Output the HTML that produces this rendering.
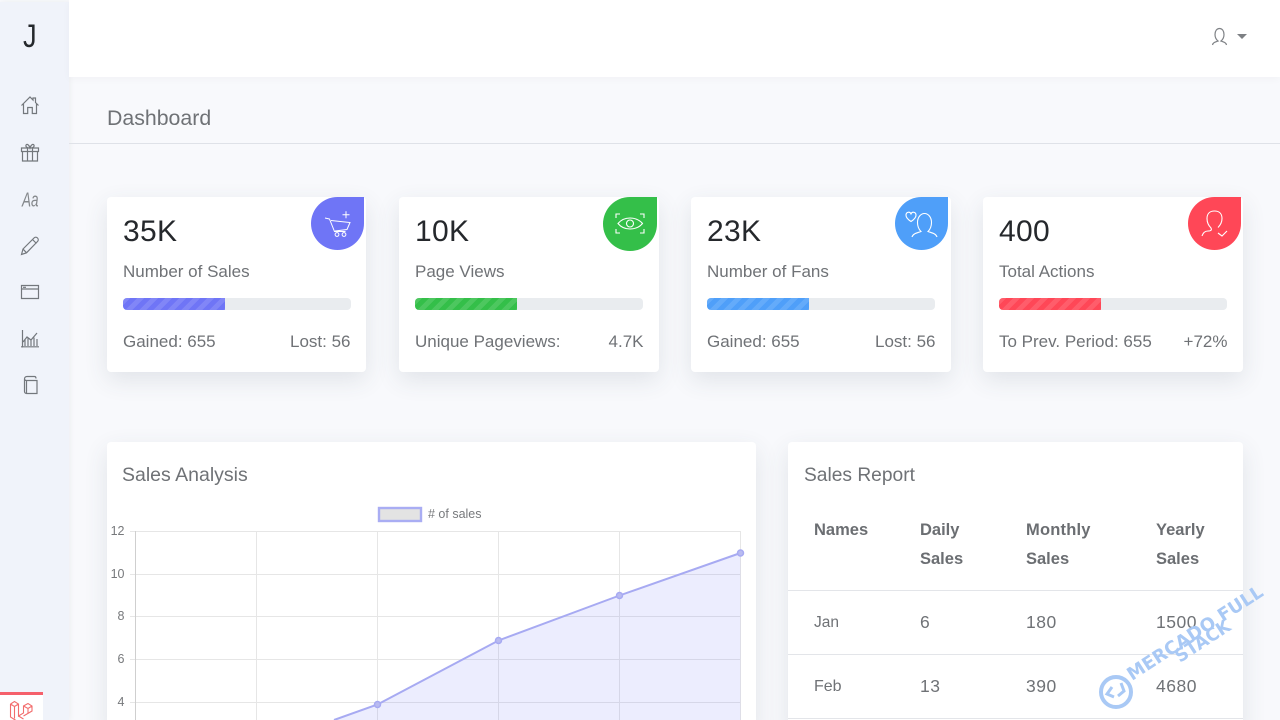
<!DOCTYPE html>
<html lang="en"><head><meta charset="utf-8"><title>Dashboard</title>
<style>
*{box-sizing:border-box}
html,body{margin:0;padding:0;width:1280px;height:720px;overflow:hidden;background:#f8f9fc;font-family:"Liberation Sans",sans-serif;color:#6f7276}
#wrap{position:relative;width:1280px;height:720px;overflow:hidden;background:#f8f9fc}
.a{position:absolute;white-space:nowrap}
#side{left:0;top:2px;width:69px;height:718px;background:#f0f3fa;box-shadow:1px 0 6px rgba(0,0,0,.05)}
#top{left:69px;top:0;width:1211px;height:77px;background:#fff;box-shadow:0 2px 8px rgba(0,0,0,.03)}
#band{left:69px;top:77px;width:1211px;height:67px;border-bottom:1px solid #dfe2e8}
.card{position:absolute;background:#fff;border-radius:4px;box-shadow:0 8px 24px rgba(60,70,90,.12)}
.num{position:absolute;left:16px;top:17px;font-size:30px;line-height:36px;color:#25282c;letter-spacing:.3px}
.lbl{position:absolute;left:16px;top:65px;font-size:17px;line-height:20px}
.bar{position:absolute;left:16px;top:101px;width:228px;height:12px;background:#e9ecef;border-radius:4px;overflow:hidden}
.bar i{display:block;width:102px;height:12px;background-size:14px 14px;background-image:linear-gradient(135deg,rgba(255,255,255,.12) 25%,transparent 25%,transparent 50%,rgba(255,255,255,.12) 50%,rgba(255,255,255,.12) 75%,transparent 75%,transparent)}
.l,.r{position:absolute;top:135px;font-size:17px;line-height:20px}
.l{left:16px}.r{right:15.500px}
.bub{position:absolute;top:0;width:53px;height:53px;border-radius:50% 0 50% 50%}
.bub svg{position:absolute;left:0;top:0}
.t{position:absolute;font-size:16.5px;line-height:20px}
.n{font-size:17.500px;letter-spacing:.5px}
.th{font-weight:700;color:#6b6e72}
.ln{position:absolute;left:788px;width:455px;height:1px;background:#e3e5e9}
svg.ic{position:absolute;left:20px;fill:none;stroke:#73777c;stroke-width:1.2}
</style></head><body><div id="wrap">
<div class="a" id="side"></div>
<div class="a" id="top"></div>
<div class="a" id="band"></div>

<div class="a" style="left:23px;top:18px;font-size:32px;line-height:36px;color:#25282c;transform:scaleX(.85);transform-origin:left">J</div>
<svg class="ic" style="top:95px" width="20" height="20" viewBox="0 0 20 20"><path d="M1.500 10.500 10 2l3 3V3h2.500v4.500l3 3M3.500 9v9.500h4.200v-6h4.600v6h4.200V9"/></svg>
<svg class="ic" style="top:142px" width="20" height="20" viewBox="0 0 20 20"><path d="M1.500 6h17v3.500h-17zM2.500 9.500v9.500h15V9.500M7.500 6v13M12.500 6v13M10 6C7 6 5.500 4.800 6 3.200 6.600 1.500 9 2.500 10 6c1-3.500 3.400-4.500 4-2.800C14.500 4.800 13 6 10 6z"/></svg>
<div class="a" style="left:22px;top:188px;font-size:18px;line-height:20px;font-style:italic;color:#85888c;transform:scale(.75,1.150);transform-origin:left top">Aa</div>
<svg class="ic" style="top:236px" width="20" height="20" viewBox="0 0 20 20"><path d="M1.500 18.500l1.500-5.500L14 2c1-1 2.500-1 3.500 0s1 2.500 0 3.500L6.500 16.800zM3 13l3.500 3.800M12.500 3.500l4 4"/></svg>
<svg class="ic" style="top:282px" width="20" height="20" viewBox="0 0 20 20"><path d="M1.500 3.500h17v13h-17zM1.500 7h17M3 5.300h3"/></svg>
<svg class="ic" style="top:329px" width="20" height="20" viewBox="0 0 20 20"><path d="M2.500 1v17.500M1 17.800h18M5 17V11M8 17V9M11 17v-6M14 17V8.500M17 17v-7M3 13l4-5 4 3 6-7"/></svg>
<svg class="ic" style="top:375px" width="20" height="20" viewBox="0 0 20 20" stroke-width="1.500"><path d="M6.500 5.500h10.500v13H6.500c-1 0-2-.8-2-2V4c0-1.500 1-2.500 2.500-2.500h7.500c1 0 1.500 1 1.500 2M4.500 4.500c.5.700 1 1 2 1M6.500 5.500v13"/></svg>

<svg class="a" style="left:1210px;top:27px" width="20" height="19" viewBox="0 0 20 19" fill="none" stroke="#7f8286" stroke-width="1.200"><path d="M2.500 18c.4-2.400 2.800-3 5.500-4-1.800-1.500-3-3.500-3-6.500C5 4 6.700 1.500 9.500 1.500S14 4 14 7.500c0 3-1.200 5-3 6.500 2.700 1 5.100 1.600 5.500 4"/></svg>
<div class="a" style="left:1237px;top:34px;width:0;height:0;border-left:5px solid transparent;border-right:5px solid transparent;border-top:5px solid #7d8084"></div>

<div class="a" style="left:107px;top:105px;font-size:21.300px;line-height:27px;color:#6f7276">Dashboard</div>

<div class="card" style="left:107px;top:197px;width:259px;height:175px">
<div class="num">35K</div><div class="lbl">Number of Sales</div>
<div class="bar"><i style="background-color:#6f75f6"></i></div>
<div class="l">Gained: 655</div><div class="r">Lost: 56</div>
<div class="bub" style="left:204px;background:#6f75f6"><svg width="53" height="53" viewBox="0 0 53 53" fill="none" stroke="#fff" stroke-width="1"><path d="M14 21l4.500 1 5 12.500h11M20 23.500l19 2-3 7-12 1.500M31.500 17.700h7M35 14.200v7"/><circle cx="26" cy="37.500" r="1.900"/><circle cx="33" cy="37.500" r="1.900"/></svg></div>
</div>

<div class="card" style="left:399px;top:197px;width:260px;height:175px">
<div class="num">10K</div><div class="lbl">Page Views</div>
<div class="bar"><i style="background-color:#34bf49"></i></div>
<div class="l">Unique Pageviews:</div><div class="r">4.7K</div>
<div class="bub" style="left:204px;width:54px;height:54px;background:#34bf49"><svg width="53" height="53" viewBox="0 0 53 53" fill="none" stroke="#fff" stroke-width="1.100"><path d="M13 21v-4h4M37 17h4v4M13 32v4h4M37 36h4v-4M15 26.500c3-3.700 7.500-5.500 12-5.500s9.500 1.800 12.500 5.500c-3 3.700-8 5.500-12.500 5.500s-9-1.800-12-5.500z"/><circle cx="27" cy="26.500" r="3.500"/></svg></div>
</div>

<div class="card" style="left:691px;top:197px;width:260px;height:175px">
<div class="num">23K</div><div class="lbl">Number of Fans</div>
<div class="bar"><i style="background-color:#4f9ff9"></i></div>
<div class="l">Gained: 655</div><div class="r">Lost: 56</div>
<div class="bub" style="left:204px;background:#4f9ff9"><svg width="53" height="53" viewBox="0 0 53 53" fill="none" stroke="#fff" stroke-width="1.100"><path d="M16 24.500c-3-2-5-4-5-6.300 0-3.500 4-3.800 5-1.300 1-2.500 5-2.200 5 1.300 0 2.300-2 4.300-5 6.300zM17 40c1-3.500 5-4 9-5.500-2-2-3.500-5-3.500-9 0-5 3-9 7-9s7 4 7 9c0 4-1.500 7-3.500 9 4 1.500 8 2 9 5.500"/></svg></div>
</div>

<div class="card" style="left:983px;top:197px;width:260px;height:175px">
<div class="num">400</div><div class="lbl">Total Actions</div>
<div class="bar"><i style="background-color:#ff4757"></i></div>
<div class="l">To Prev. Period: 655</div><div class="r">+72%</div>
<div class="bub" style="left:205px;background:#ff4757"><svg width="53" height="53" viewBox="0 0 53 53" fill="none" stroke="#fff" stroke-width="1.100"><path d="M14 39c1-3 3-5 6-5 3 0 4-1 3-3-2.500-2.500-4-5.500-4-9.500 0-5 3-7.500 7.500-7.500s7.500 2.500 7.500 7.500c0 4-1.500 6.500-4 9M30 36l4 3 5-5"/></svg></div>
</div>

<div class="card" style="left:107px;top:442px;width:649px;height:290px"></div>
<div class="card" style="left:788px;top:442px;width:455px;height:290px"></div>

<div class="t" style="left:122px;top:464px;font-size:19.500px;line-height:23px">Sales Analysis</div>
<div class="t" style="left:804px;top:464px;font-size:19.200px;line-height:23px">Sales Report</div>

<svg class="a" style="left:100px;top:500px" width="660" height="220" viewBox="100 500 660 220">
<rect x="379" y="508" width="42" height="13" fill="#e3e3e3" stroke="#a9adf3" stroke-width="2.400"/>
<g stroke="#e6e6e6" stroke-width="1">
<path d="M130 531.500H741M130 574.500H741M130 616.500H741M130 659.500H741M130 702.500H741"/>
<path d="M256.500 531V720M377.500 531V720M498.500 531V720M619.500 531V720M740.500 531V720"/>
<path d="M135.500 531V720" stroke="#cfcfcf"/>
</g>
<path d="M334 720L377.500 704.500 498.500 640.500 619.500 595.500 740.500 553V720Z" fill="rgba(110,117,246,.13)"/>
<path d="M334 720L377.500 704.500 498.500 640.500 619.500 595.500 740.500 553" fill="none" stroke="#a7aaf2" stroke-width="2"/>
<g fill="#b9bbf0" stroke="#a7aaf2" stroke-width="1.500"><circle cx="377.500" cy="704.500" r="3"/><circle cx="498.500" cy="640.500" r="3"/><circle cx="619.500" cy="595.500" r="3"/><circle cx="740.500" cy="553" r="3"/></g>
<g font-family="Liberation Sans" font-size="12.500" fill="#77797c" text-anchor="end"><text x="124.500" y="535">12</text><text x="124.500" y="578">10</text><text x="124.500" y="620">8</text><text x="124.500" y="663">6</text><text x="124.500" y="706">4</text></g>
</svg>
<div class="a" style="left:428px;top:507px;font-size:12.500px;line-height:15px;color:#77797c"># of sales</div>

<div class="t th" style="left:814px;top:520px">Names</div>
<div class="t th" style="left:920px;top:520px">Daily</div>
<div class="t th" style="left:920px;top:549px">Sales</div>
<div class="t th" style="left:1026px;top:520px;letter-spacing:.2px">Monthly</div>
<div class="t th" style="left:1026px;top:549px">Sales</div>
<div class="t th" style="left:1156px;top:520px">Yearly</div>
<div class="t th" style="left:1156px;top:549px">Sales</div>
<div class="ln" style="top:590px"></div>
<div class="t" style="left:814px;top:613px;font-size:15.500px">Jan</div><div class="t n" style="left:920px;top:612px">6</div><div class="t n" style="left:1026px;top:612px">180</div><div class="t n" style="left:1156px;top:612px">1500</div>
<div class="ln" style="top:654px"></div>
<div class="t" style="left:814px;top:677px;font-size:16px">Feb</div><div class="t n" style="left:920px;top:676px">13</div><div class="t n" style="left:1026px;top:676px">390</div><div class="t n" style="left:1156px;top:676px">4680</div>
<div class="ln" style="top:718px"></div>

<div class="a" style="left:0;top:692px;width:43px;height:28px;background:#fff;border-top:3px solid #f5606b"></div>
<svg class="a" style="left:0;top:700px" width="43" height="20" viewBox="0 700 43 20" fill="none" stroke="#f26d6d" stroke-width="1.100"><path d="M10.500 704l4-2.500 4 2.500v12l5-3v-7l4.500-2.500 4 2.500v5l-8.500 5M14.500 706.500l4-2.500M10.500 704l4 2.500v12M10.500 704v13l5.500 3.500M23.500 706l4.500 2.500 4-2.500M28 708.500v4.500M18.500 716l5 3"/></svg>

<svg class="a" style="left:1090px;top:570px" width="190" height="150" viewBox="1090 570 190 150">
<circle cx="1116" cy="692" r="15" fill="none" stroke="#a9c9f5" stroke-width="4"/>
<path d="M1112 687l-5 7 7 3M1121 683l3 8-6 5" fill="none" stroke="#a9c9f5" stroke-width="3"/>
<g font-family="DejaVu Sans" font-weight="700" fill="#a9c9f5">
<text x="1132" y="681" font-size="18" textLength="158" lengthAdjust="spacingAndGlyphs" transform="rotate(-33 1132 681)">MERCADO FULL</text>
<text x="1180" y="663" font-size="18" textLength="62" lengthAdjust="spacingAndGlyphs" transform="rotate(-33 1180 663)">STACK</text>
</g>
</svg>
</div></body></html>
